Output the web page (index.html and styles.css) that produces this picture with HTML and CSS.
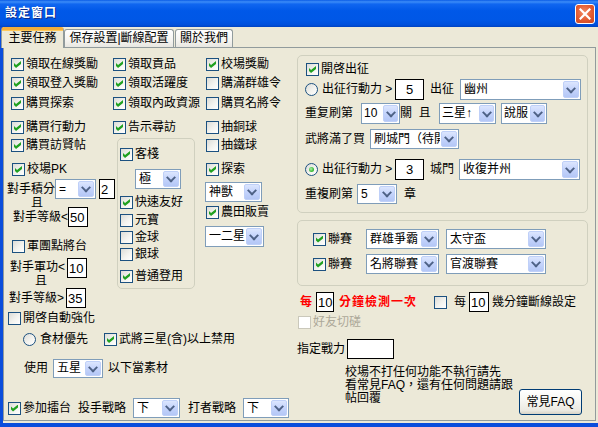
FILE: index.html
```html
<!DOCTYPE html>
<html lang="zh-Hant">
<head>
<meta charset="utf-8">
<title>設定窗口</title>
<link rel="stylesheet" href="styles.css">
</head>
<body>
<div class="window">
  <div class="titlebar">
    <span class="title">設定窗口</span>
    <span class="close"><svg width="12" height="12" viewBox="0 0 12 12"><path d="M1.5 1.5 L10.5 10.5 M10.5 1.5 L1.5 10.5" stroke="#fff" stroke-width="2.2" stroke-linecap="square"/></svg></span>
  </div>
  <div class="frame">
    <div class="client">
      <div class="tabs">
        <div class="tab sel">主要任務</div>
        <div class="tab t2">保存設置|斷線配置</div>
        <div class="tab t3">關於我們</div>
      </div>
      <div class="panel">
        <div class="left">
          <div class="top3">
            <div class="col colA">
              <div class="row ml7 mt10"><span class="cb on"></span>領取在線獎勵</div>
              <div class="row ml7 mt6"><span class="cb on"></span>領取登入獎勵</div>
              <div class="row ml7 mt7"><span class="cb on"></span>購買探索</div>
              <div class="row ml7 mt11"><span class="cb on"></span>購買行動力</div>
              <div class="row ml7 mt5"><span class="cb on"></span>購買訪賢帖</div>
              <div class="row ml8 mt11"><span class="cb on"></span>校場PK</div>
              <div class="row fixed20 mt3 ml3">
                <span class="lbl2 w48">對手積分<span class="qie q24">且</span></span>
                <span class="combo w41"><span class="val">=</span><span class="arrow"></span></span>
                <span class="tb w16 ml3">2</span>
              </div>
              <div class="row mt8 ml9"><span class="w55">對手等級&lt;</span><span class="tb w20">50</span></div>
              <div class="row ml8 mt13"><span class="cb"></span>軍團點將台</div>
              <div class="row fixed20 mt5 ml6">
                <span class="lbl2 lbl2b w57">對手軍功&lt;<span class="qie q25">且</span></span>
                <span class="tb w20">10</span>
              </div>
              <div class="row mt10 ml5"><span class="w57">對手等級&gt;</span><span class="tb w20">35</span></div>
            </div>
            <div class="col colB">
              <div class="row mt10"><span class="cb on"></span>領取貢品</div>
              <div class="row mt6"><span class="cb on"></span>領取活躍度</div>
              <div class="row mt7"><span class="cb on"></span>領取內政資源</div>
              <div class="row mt11"><span class="cb on"></span>告示尋訪</div>
              <div class="grp grpB mt4 ml4">
                <div class="row mt9 ml2"><span class="cb on"></span>客棧</div>
                <span class="combo w46 mt8 ml17"><span class="val">極</span><span class="arrow"></span></span>
                <div class="row mt7 ml2"><span class="cb on"></span>快速友好</div>
                <div class="row mt5 ml2"><span class="cb"></span>元寶</div>
                <div class="row mt4 ml2"><span class="cb"></span>金球</div>
                <div class="row mt4 ml2"><span class="cb"></span>銀球</div>
                <div class="row mt9 ml2"><span class="cb on"></span>普通登用</div>
              </div>
            </div>
            <div class="col colC">
              <div class="row ml1 mt10"><span class="cb on"></span>校場獎勵</div>
              <div class="row ml1 mt6"><span class="cb"></span>購滿群雄令</div>
              <div class="row ml1 mt7"><span class="cb"></span>購買名將令</div>
              <div class="row ml1 mt11"><span class="cb"></span>抽銅球</div>
              <div class="row ml1 mt5"><span class="cb"></span>抽鐵球</div>
              <div class="row ml1 mt11"><span class="cb on"></span>探索</div>
              <span class="combo w57 mt6"><span class="val">神獸</span><span class="arrow"></span></span>
              <div class="row ml1 mt4"><span class="cb on"></span>農田販賣</div>
              <span class="combo w59 h21 mt7"><span class="val">一二星</span><span class="arrow"></span></span>
            </div>
          </div>
          <div class="row ml4 mt4"><span class="cb"></span>開啓自動強化</div>
          <div class="row mt8">
            <span class="radio ml19"></span><span class="w64 ml4">食材優先</span>
            <span class="cb on"></span>武將三星(含)以上禁用
          </div>
          <div class="row mt13 ml20">
            <span>使用</span>
            <span class="combo w50 h19 ml5"><span class="val">五星</span><span class="arrow"></span></span>
            <span class="ml5">以下當素材</span>
          </div>
          <div class="row mt20 ml4">
            <span class="cb on"></span>參加擂台
            <span class="ml7">投手戰略</span>
            <span class="combo w47 ml7"><span class="val">下</span><span class="arrow"></span></span>
            <span class="ml8">打者戰略</span>
            <span class="combo w46 ml7"><span class="val">下</span><span class="arrow"></span></span>
          </div>
        </div>
        <div class="right">
          <div class="grp grp1 mt7">
            <div class="row ml8 mt7"><span class="cb on"></span>開啓出征</div>
            <div class="row ml7 mt3">
              <span class="radio"></span><span class="w73 ml4">出征行動力 &gt;</span>
              <span class="tb w29 h21 center">5</span>
              <span class="ml6">出征</span>
              <span class="combo w121 h21 ml6"><span class="val">幽州</span><span class="arrow"></span></span>
            </div>
            <div class="row ml7 mt3">
              <span class="w56">重复刷第</span>
              <span class="combo w39 h21 tight"><span class="val">10</span><span class="arrow"></span></span>
              <span class="w39">關&nbsp;&nbsp;且</span>
              <span class="combo w57 h21 tight"><span class="val">三星↑</span><span class="arrow"></span></span>
              <span class="combo w46 h21 ml5 tight"><span class="val">說服</span><span class="arrow"></span></span>
            </div>
            <div class="row ml7 mt5">
              <span class="w65">武將滿了買</span>
              <span class="combo w89"><span class="val">刷城門（待開啓）</span><span class="arrow"></span></span>
            </div>
            <div class="row ml7 mt10">
              <span class="radio on"></span><span class="w73 ml4">出征行動力 &gt;</span>
              <span class="tb w29 h21 center">3</span>
              <span class="ml6">城門</span>
              <span class="combo w121 h21 ml5"><span class="val">收復并州</span><span class="arrow"></span></span>
            </div>
            <div class="row ml7 mt4">
              <span class="w52">重複刷第</span>
              <span class="combo w40"><span class="val">5</span><span class="arrow"></span></span>
              <span class="ml7">章</span>
            </div>
          </div>
          <div class="grp grp2 mt7">
            <div class="row ml15 mt8">
              <span class="cb on"></span><span class="w38">聯賽</span>
              <span class="combo w73"><span class="val">群雄爭霸</span><span class="arrow"></span></span>
              <span class="combo w100 ml7"><span class="val">太守盃</span><span class="arrow"></span></span>
            </div>
            <div class="row ml15 mt5">
              <span class="cb on"></span><span class="w38">聯賽</span>
              <span class="combo w73"><span class="val">名將聯賽</span><span class="arrow"></span></span>
              <span class="combo w100 ml7"><span class="val">官渡聯賽</span><span class="arrow"></span></span>
            </div>
          </div>
          <div class="row mt6 ml3">
            <span class="red">每</span>
            <span class="tb w18 ml4">10</span>
            <span class="red spaced ml5">分鐘檢測一次</span>
            <span class="cb ml17"></span>
            <span class="ml5">每</span>
            <span class="tb w20 ml3">10</span>
            <span class="ml3">幾分鐘斷線設定</span>
          </div>
          <div class="row mt4 ml1"><span class="cb dis"></span><span class="gray">好友切磋</span></div>
          <div class="row mt10">
            <span class="w50">指定戰力</span>
            <span class="tb w47"></span>
          </div>
          <div class="row top mt7">
            <p class="note ml48">校場不打任何功能不執行請先<br>看常見FAQ，還有任何問題請跟<br>帖回覆</p>
            <span class="btn mt23">常見FAQ</span>
          </div>
        </div>
      </div>
    </div>
  </div>
</div>
</body>
</html>
```
FILE: styles.css
```css
* { box-sizing: border-box; }
html, body { margin: 0; padding: 0; }
body {
  width: 598px; height: 427px; overflow: hidden; background: #fff;
  font-family: "Liberation Sans", "Noto Sans CJK TC", sans-serif;
  font-size: 12px; line-height: 13px; color: #000;
}

.window { width: 598px; height: 427px; display: flex; flex-direction: column; }

.titlebar {
  height: 27px; flex: none; display: flex; align-items: center; justify-content: space-between;
  padding: 0 3px 0 5px;
  background: linear-gradient(#0a5ce6 0%, #3c8cf8 7%, #1066f0 15%, #0058e8 40%, #0057e6 75%, #0050dc 92%, #0042c0 100%);
}
.title { color: #fff; font-weight: bold; font-size: 12px; letter-spacing: 1px; text-shadow: 1px 1px 0 #0b2c8c; }
.close {
  width: 20px; height: 20px; border: 1px solid #fff; border-radius: 3px;
  display: flex; align-items: center; justify-content: center;
  background: radial-gradient(circle at 45% 40%, #f28b66 0%, #e25a30 55%, #cc4520 100%);
}

.frame { flex: 1; display: flex; background: #0a4ddc; padding: 0 0 4px 3px; }
.client { flex: 1; background: #ece9d8; display: flex; flex-direction: column; }

.tabs { height: 20px; flex: none; display: flex; align-items: flex-end; position: relative; z-index: 1; }
.tab {
  height: 18px; border: 1px solid #919b9c; border-bottom: 0; border-radius: 3px 3px 0 0;
  background: linear-gradient(#ffffff, #f5f4f0 60%, #e8e7e1);
  padding-top: 2px; text-align: center; white-space: nowrap;
}
.tab.sel {
  height: 21px; width: 63px; margin-left: -2px; margin-bottom: -1px;
  border-top: 3px solid #f2ad3c; background: #ece9d8; box-shadow: inset 0 1px 0 #ffc95a;
}
.tab.t2 { width: 110px; }
.tab.t3 { width: 58px; margin-left: 1px; }

.panel {
  height: 374px; flex: none; border: 1px solid #919b9c;
  background: #ece9d8; display: flex; margin-right: 2px;
}

.left { width: 286px; flex: none; display: flex; flex-direction: column; align-items: flex-start; }
.top3 { display: flex; align-items: flex-start; }
.col { display: flex; flex-direction: column; align-items: flex-start; }
.colA { width: 109px; }
.colB { width: 92px; }
.colC { width: 85px; }
.right { margin-left: 7px; width: 291px; display: flex; flex-direction: column; align-items: flex-start; }

.row { display: flex; align-items: center; white-space: nowrap; flex: none; }
.row.top { align-items: flex-start; }
.fixed20 { height: 20px; align-items: flex-start; }

.grp { border: 1px solid #d0d0bf; border-radius: 5px; display: flex; flex-direction: column; align-items: flex-start; flex: none; }
.grpB { width: 78px; height: 151px; }
.grp1 { width: 291px; height: 158px; }
.grp2 { width: 291px; height: 66px; }

.lbl2 { display: block; flex: none; line-height: 14px; padding-top: 3px; }
.lbl2b { padding-top: 2px; }
.qie { display: block; }
.q24 { padding-left: 24px; }
.q25 { padding-left: 25px; }

.cb {
  position: relative; flex: none; width: 13px; height: 13px; margin-right: 2px;
  border: 1px solid #1c5180;
  background: linear-gradient(135deg, #dcdcd7 0%, #f3f3ef 55%, #ffffff 100%);
}
.cb.dis { border-color: #cac8bb; background: #fff; }
.cb.on::after {
  content: ""; position: absolute; left: 2px; top: 2px; width: 7px; height: 7px;
  background: #21a121;
  clip-path: polygon(0 29%, 29% 57%, 100% 0, 100% 43%, 29% 100%, 0 71%);
}
.radio {
  position: relative; flex: none; width: 13px; height: 13px; border-radius: 50%;
  border: 1px solid #1c5180;
  background: linear-gradient(135deg, #dcdcd7 0%, #f3f3ef 55%, #ffffff 100%);
}
.radio.on::after {
  content: ""; position: absolute; left: 3px; top: 3px; width: 5px; height: 5px; border-radius: 50%;
  background: radial-gradient(circle at 40% 40%, #b6f0ae 0%, #3fbf3f 55%, #1f9a1f 100%);
}

.combo { display: inline-flex; flex: none; height: 20px; border: 1px solid #7f9db9; background: #fff; }
.combo.h21 { height: 21px; }
.combo.h19 { height: 19px; }
.combo .val { flex: 1; min-width: 0; overflow: hidden; white-space: nowrap; padding-left: 3px; display: flex; align-items: center; }
.combo.tight .val { padding-left: 2px; }
.combo .arrow {
  position: relative; flex: none; width: 16px; margin: 1px;
  border: 1px solid #bfd0f8; border-radius: 2px;
  background: linear-gradient(#dce6fe 0%, #c6d5fc 45%, #b4c7f6 100%);
}
.combo.tight .arrow { width: 15px; }
.combo .arrow::after {
  content: ""; position: absolute; left: 50%; top: 50%; width: 5px; height: 5px;
  border-right: 2px solid #4d6185; border-bottom: 2px solid #4d6185;
  transform: translate(-50%, -70%) rotate(45deg);
}

.tb {
  display: inline-flex; align-items: center; flex: none; height: 20px;
  border: 1px solid #000; background: #fff; padding-left: 1px; font-size: 13px;
}
.tb.h21 { height: 21px; }
.tb.center { justify-content: center; padding-left: 0; }

.red { color: #ff0000; font-weight: bold; }
.spaced { letter-spacing: 1px; }
.gray { color: #aca899; }

.note { margin: 0; width: 174px; line-height: 13px; white-space: nowrap; }
.btn {
  width: 63px; height: 26px; flex: none; display: flex; align-items: center; justify-content: center;
  border: 1px solid #003c74; border-radius: 3px;
  background: linear-gradient(#ffffff 0%, #f6f6f2 45%, #ebe9e1 85%, #d8d3c7 100%);
}

/* sizes */
.w16 { width: 16px; } .w18 { width: 18px; } .w20 { width: 20px; } .w29 { width: 29px; }
.w38 { width: 38px; } .w39 { width: 39px; } .w40 { width: 40px; } .w41 { width: 41px; }
.w45 { width: 45px; } .w46 { width: 46px; } .w47 { width: 47px; } .w48 { width: 48px; }
.w50 { width: 50px; } .w52 { width: 52px; } .w55 { width: 55px; } .w56 { width: 56px; }
.w57 { width: 57px; } .w59 { width: 59px; } .w64 { width: 64px; } .w65 { width: 65px; }
.w73 { width: 73px; } .w89 { width: 89px; } .w100 { width: 100px; } .w121 { width: 121px; }
span[class*="w"] { flex: none; }

/* spacing */
.mt3 { margin-top: 3px; } .mt4 { margin-top: 4px; } .mt5 { margin-top: 5px; } .mt6 { margin-top: 6px; }
.mt7 { margin-top: 7px; } .mt8 { margin-top: 8px; } .mt9 { margin-top: 9px; } .mt10 { margin-top: 10px; }
.mt11 { margin-top: 11px; } .mt13 { margin-top: 13px; } .mt20 { margin-top: 20px; } .mt23 { margin-top: 23px; }
.ml1 { margin-left: 1px; } .ml2 { margin-left: 2px; } .ml3 { margin-left: 3px; } .ml4 { margin-left: 4px; }
.ml5 { margin-left: 5px; } .ml6 { margin-left: 6px; } .ml7 { margin-left: 7px; } .ml8 { margin-left: 8px; }
.ml9 { margin-left: 9px; } .ml15 { margin-left: 15px; } .ml17 { margin-left: 17px; } .ml19 { margin-left: 19px; }
.ml20 { margin-left: 20px; } .ml48 { margin-left: 48px; }
```
